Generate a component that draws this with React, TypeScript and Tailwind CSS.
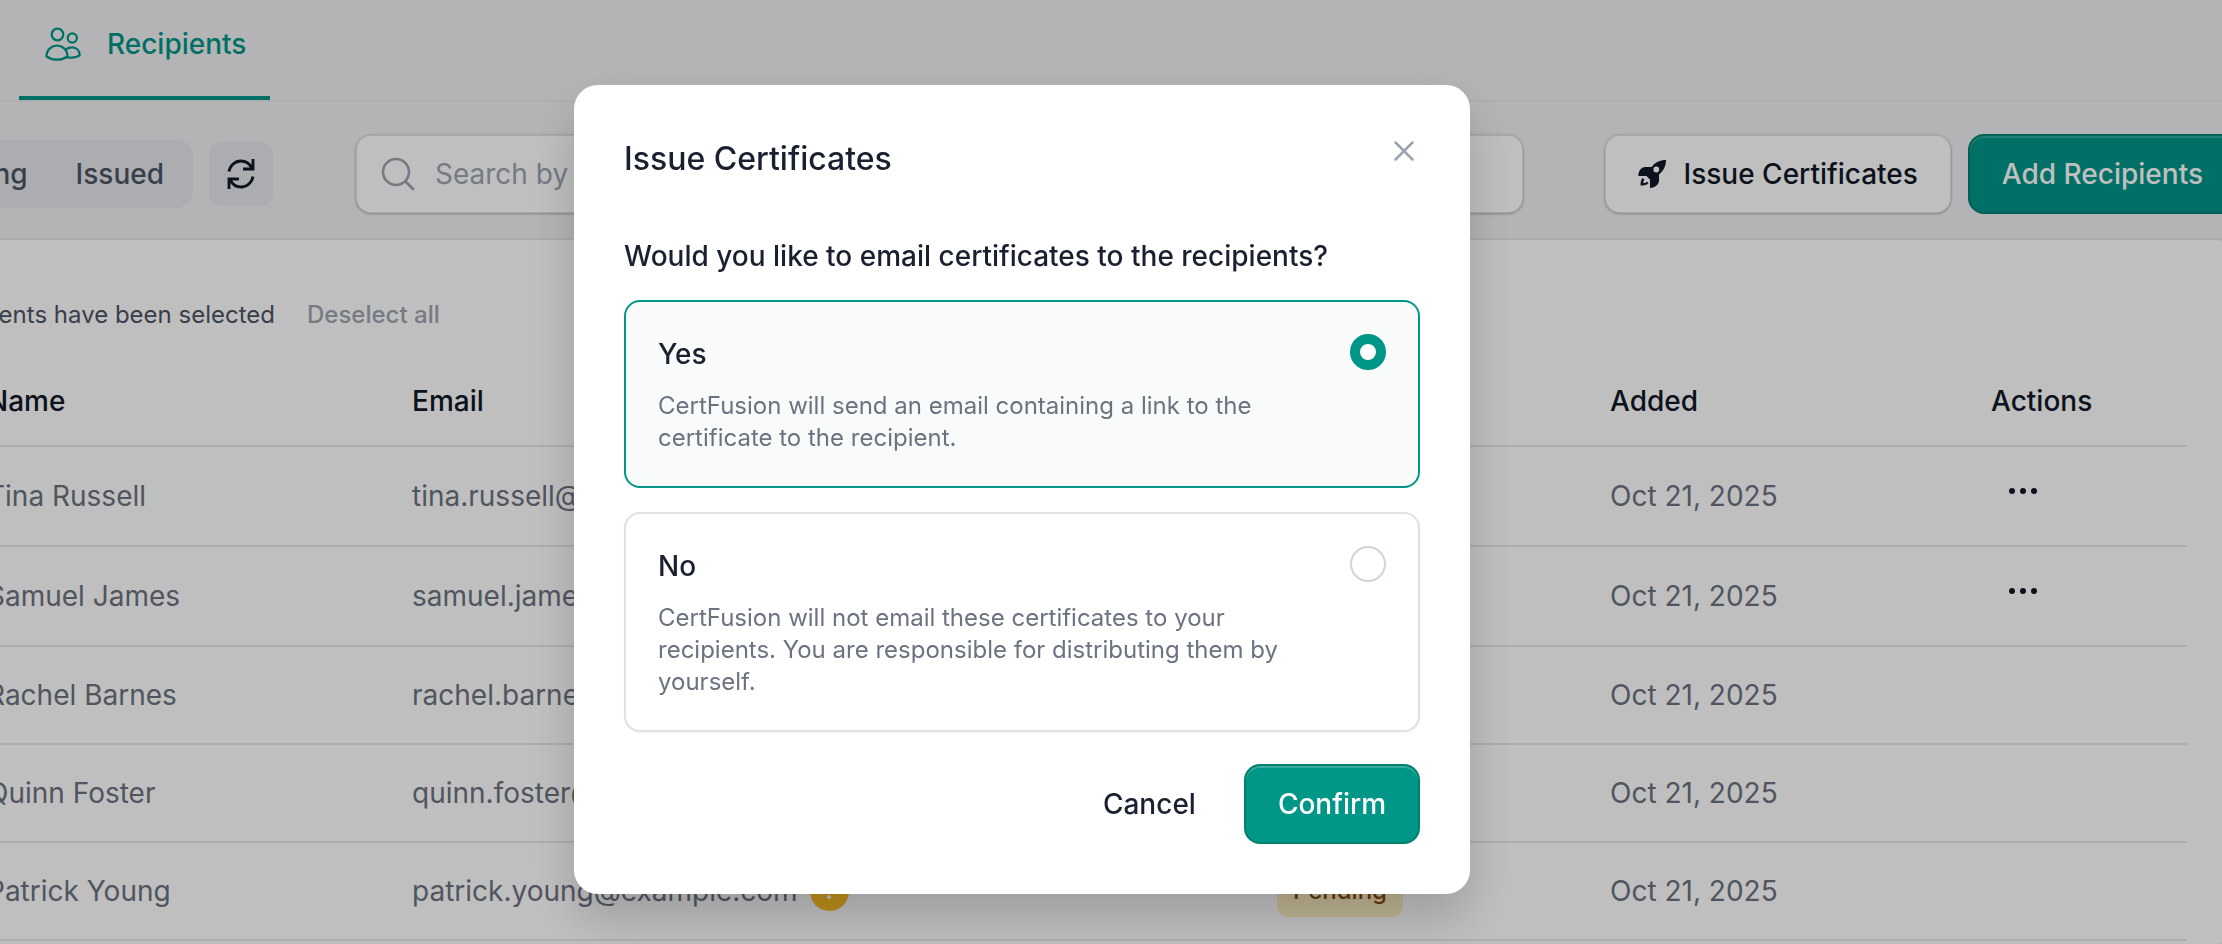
import { useState } from "react";
import { clsx } from "clsx";

const recipients = [
  { name: "Tina Russell", email: "tina.russell@example.com", added: "Oct 21, 2025", actions: true },
  { name: "Samuel James", email: "samuel.james@example.com", added: "Oct 21, 2025", actions: true },
  { name: "Rachel Barnes", email: "rachel.barnes@example.com", added: "Oct 21, 2025", actions: false },
  { name: "Quinn Foster", email: "quinn.foster@example.com", added: "Oct 21, 2025", actions: false },
  { name: "Patrick Young", email: "patrick.young@example.com", added: "Oct 21, 2025", actions: false },
];

const options = [
  {
    value: "yes",
    label: "Yes",
    description: "CertFusion will send an email containing a link to the certificate to the recipient.",
  },
  {
    value: "no",
    label: "No",
    description:
      "CertFusion will not email these certificates to your recipients. You are responsible for distributing them by yourself.",
  },
];

const PeopleIcon = () => (
  <svg width="36" height="34" viewBox="0 0 36 34" fill="none" stroke="currentColor" strokeWidth="2.2" strokeLinecap="round" strokeLinejoin="round">
    <circle cx="12.5" cy="7.5" r="5.8" />
    <circle cx="27.3" cy="11" r="4.6" />
    <path d="M1.5 29.5C1.5 22.5 7 18.5 12 18.5s10.5 4 10.5 11c-6 4.2-15 4.2-21 0z" />
    <path d="M21 22.3c1.8-1.4 3.9-2 6-2 4.6 0 7.7 3.2 7.7 8.2-3.5 2-8 2.6-12 1.8" />
  </svg>
);

const RefreshIcon = () => (
  <svg width="28" height="32" viewBox="0 0 28 32" fill="none" stroke="currentColor" strokeWidth="2.8">
    <path d="M2 13.5C3 7.5 8 3 14 3c4.6 0 8.6 2.6 10.8 7" />
    <path d="M26 1v10H16" />
    <path d="M26 18.5C25 24.5 20 29 14 29c-4.6 0-8.6-2.6-10.8-7" />
    <path d="M2 31V21h10" />
  </svg>
);

const SearchIcon = () => (
  <svg width="34" height="34" viewBox="0 0 34 34" fill="none" stroke="currentColor" strokeWidth="2.6" strokeLinecap="round">
    <circle cx="15" cy="15" r="13" />
    <path d="M24.5 24.5 32 32" />
  </svg>
);

const RocketIcon = () => (
  <svg width="28" height="28" viewBox="0 0 28 28" fill="currentColor">
    <path
      fillRule="evenodd"
      d="M28 0C22 0 17 2.5 13.5 7H7C3.5 7 .5 10.5.3 16h8.200l3.500 3.500V28c5.300-.5 9-3.500 9-7.500v-6C25.500 11 28 6 28 0zM18.300 6.600a2.900 2.900 0 1 1 0 5.800 2.900 2.900 0 0 1 0-5.800z"
    />
    <path d="M4.500 18c-1.500 1.500-2 4.500-2 7.500 3 0 6.500-.3 8-2.200l-1.400-1.500c-1 .9-2.200 1.200-3.800 1.300.1-1.500.3-2.500 1.200-3.500z" />
  </svg>
);

const DotsIcon = () => (
  <svg width="28" height="8" viewBox="0 0 28 8" fill="currentColor">
    <circle cx="3" cy="4" r="3" />
    <circle cx="14" cy="4" r="3" />
    <circle cx="25" cy="4" r="3" />
  </svg>
);

const CloseIcon = () => (
  <svg width="20" height="20" viewBox="0 0 20 20" fill="none" stroke="currentColor" strokeWidth="2.5" strokeLinecap="round">
    <path d="M1.500 1.500l17 17M18.500 1.500l-17 17" />
  </svg>
);

const Toolbar = () => (
  <div className="flex items-center pt-8 pb-[26px]">
    <div className="flex h-[68px] shrink-0 items-center rounded-2xl bg-[#e5e7eb] px-[5px] font-medium text-[#4b5563]">
      {["All", "Pending", "Issued"].map((tab) => (
        <button key={tab} type="button" className="px-6">
          {tab}
        </button>
      ))}
    </div>
    <button
      type="button"
      aria-label="Refresh"
      className="ml-4 flex size-16 shrink-0 items-center justify-center rounded-xl bg-[#e5e7eb] text-[#111827]"
    >
      <RefreshIcon />
    </button>
    <label className="mr-20 ml-[82px] flex h-20 min-w-0 flex-1 items-center gap-5 rounded-2xl border-2 border-black/5 bg-white bg-clip-padding pl-6 text-[#9ca3af] shadow-sm">
      <SearchIcon />
      <input
        type="text"
        aria-label="Search"
        placeholder="Search by name or email"
        className="min-w-0 flex-1 bg-transparent outline-none placeholder:text-[#9ca3af]"
      />
    </label>
    <button
      type="button"
      className="flex h-20 shrink-0 items-center gap-[18px] rounded-2xl border-2 border-black/5 bg-white bg-clip-padding px-8 font-medium text-[#111827] shadow-sm"
    >
      <RocketIcon />
      Issue Certificates
    </button>
    <button
      type="button"
      className="ml-4 h-20 shrink-0 rounded-2xl border-2 border-[#00806f] bg-[#009688] px-8 font-medium text-white inset-shadow-[0_2px_0_rgba(255,255,255,0.2)]"
    >
      Add Recipients
    </button>
  </div>
);

const RecipientsTable = () => (
  <table className="mt-6 w-full table-fixed border-separate border-spacing-0 text-left">
    <colgroup>
      <col className="w-[130px]" />
      <col className="w-[425px]" />
      <col />
      <col className="w-[333px]" />
      <col className="w-[381px]" />
      <col className="w-[196px]" />
    </colgroup>
    <thead>
      <tr className="h-[90px] text-[#111827] *:border-b-2 *:border-[#e5e7eb] *:font-medium">
        <th>
          <input type="checkbox" aria-label="Select all" className="block size-7" />
        </th>
        <th>Name</th>
        <th>Email</th>
        <th>Status</th>
        <th>Added</th>
        <th>Actions</th>
      </tr>
    </thead>
    <tbody>
      {recipients.map(({ name, email, added, actions }) => (
        <tr
          key={name}
          className={clsx("text-[#6b7280] *:border-b-2 *:border-[#e5e7eb]", actions ? "h-[100px]" : "h-[98px]")}
        >
          <td>
            <input type="checkbox" aria-label={`Select ${name}`} className="block size-7" />
          </td>
          <td>{name}</td>
          <td>
            <div className="flex items-center gap-3">
              {email}
              <span className="flex size-[39px] items-center justify-center rounded-full bg-[#fbbf24] text-2xl font-semibold text-white">
                !
              </span>
            </div>
          </td>
          <td>
            <span className="inline-block rounded-xl bg-[#fef0c3] px-4 py-2 align-middle text-2xl leading-9 font-medium text-[#854d0e]">
              Pending
            </span>
          </td>
          <td>{added}</td>
          <td>
            {actions && (
              <button type="button" aria-label={`Actions for ${name}`} className="block px-[18px] pb-2.5 text-[#111827]">
                <DotsIcon />
              </button>
            )}
          </td>
        </tr>
      ))}
    </tbody>
  </table>
);

const IssueDialog = () => {
  const [selected, setSelected] = useState("yes");
  return (
    <div className="fixed inset-0 flex items-start justify-center bg-black/25 pt-[85px] pr-[178px]">
      <div
        role="dialog"
        aria-modal="true"
        aria-labelledby="issue-title"
        className="w-full max-w-[896px] rounded-3xl bg-white p-[50px] shadow-[0_24px_48px_rgba(0,0,0,0.18)]"
      >
        <div className="flex items-start justify-between">
          <h2 id="issue-title" className="text-[32px] leading-[48px] font-medium text-[#1a2030]">
            Issue Certificates
          </h2>
          <button type="button" aria-label="Close" className="flex size-8 items-center justify-center text-[#9ca3af]">
            <CloseIcon />
          </button>
        </div>
        <fieldset className="mt-[53px] flex flex-col gap-6">
          <legend className="mb-6 font-medium text-[#1a2030]">
            Would you like to email certificates to the recipients?
          </legend>
          {options.map(({ value, label, description }) => (
            <label
              key={value}
              className={clsx(
                "flex items-start gap-6 rounded-2xl border-2 p-8",
                selected === value ? "border-[#009688] bg-[#f9fbfa]" : "border-[#e0e1e3] bg-white shadow-xs"
              )}
            >
              <span className="flex flex-1 flex-col gap-4">
                <span className="font-medium text-[#1a2030]">{label}</span>
                <span className="text-2xl leading-8 text-[#6b7280]">{description}</span>
              </span>
              <input
                type="radio"
                name="send-email"
                value={value}
                checked={selected === value}
                onChange={() => setSelected(value)}
                className="size-9 shrink-0 appearance-none rounded-full border-2 border-[#d1d5db] bg-white checked:border-[10px] checked:border-[#009688]"
              />
            </label>
          ))}
        </fieldset>
        <div className="mt-8 flex justify-end gap-4">
          <button type="button" className="h-20 px-8 font-medium text-[#1a2030]">
            Cancel
          </button>
          <button
            type="button"
            className="h-20 rounded-2xl border-2 border-[#00806f] bg-[#009688] px-8 font-medium text-white inset-shadow-[0_2px_0_rgba(255,255,255,0.2)]"
          >
            Confirm
          </button>
        </div>
      </div>
    </div>
  );
};

export default function App() {
  return (
    <div className="min-h-screen overflow-hidden bg-[#f0f1f4] font-['Inter',sans-serif] text-[28px] leading-10">
      <div className="-mr-[15px] -ml-[193px] flex min-h-screen flex-col">
        <nav className="flex border-b-2 border-[#e9eaed] pl-[212px]">
          <a
            href="#recipients"
            className="flex h-[100px] items-center gap-[26px] border-b-4 border-[#009688] pr-6 pb-2 pl-[26px] font-medium text-[#009688]"
          >
            <PeopleIcon />
            Recipients
          </a>
        </nav>
        <Toolbar />
        <section className="flex-1 rounded-[20px] bg-white px-[50px] pt-[57px] ring-2 ring-black/5">
          <div className="flex gap-8 text-2xl leading-9">
            <p className="w-[418px] text-right text-[#4b5563]">All 5 recipients have been selected</p>
            <button type="button" className="font-medium text-[#9ca3af]">
              Deselect all
            </button>
          </div>
          <RecipientsTable />
        </section>
      </div>
      <IssueDialog />
    </div>
  );
}
